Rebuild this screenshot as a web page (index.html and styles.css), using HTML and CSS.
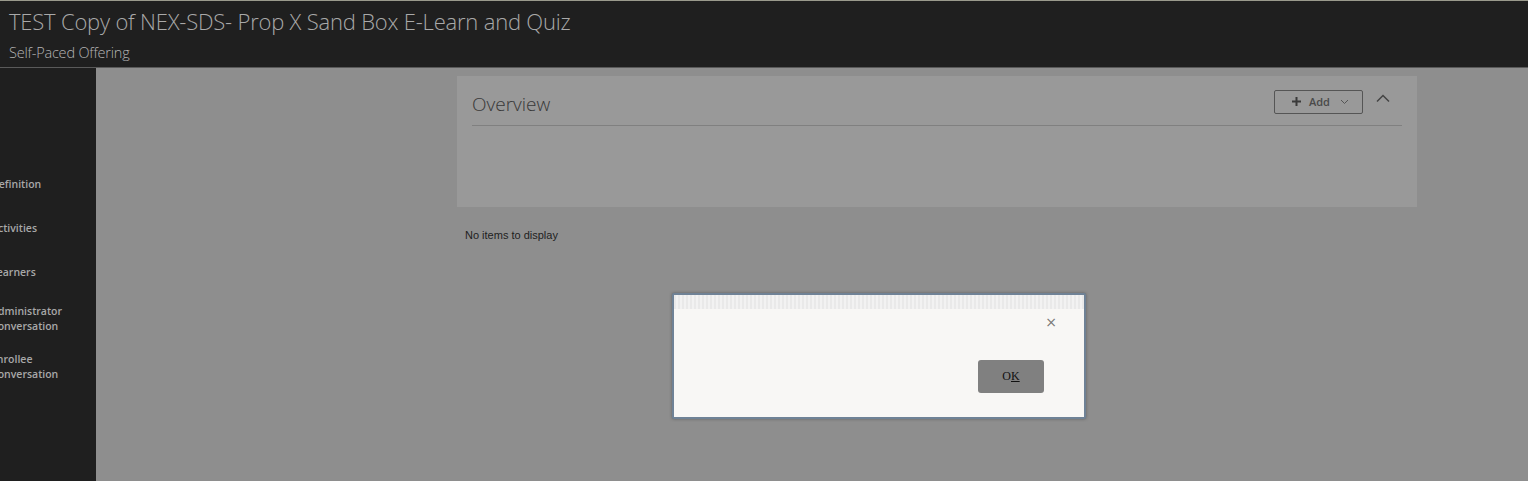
FILE: index.html
```html
<!DOCTYPE html>
<html lang="en">
<head>
  <meta charset="UTF-8">
  <title>Self-Paced Offering</title>
  <link rel="stylesheet" href="styles.css">
</head>
<body>
  <div class="header">
    <h1>TEST Copy of NEX-SDS- Prop X Sand Box E-Learn and Quiz</h1>
    <div class="subtitle">Self-Paced Offering</div>
  </div>
  <div class="page">
    <div class="sidebar">
      <ul class="nav">
        <li>Definition</li>
        <li>Activities</li>
        <li>Learners</li>
        <li>Administrator<br>Conversation</li>
        <li>Enrollee<br>Conversation</li>
      </ul>
    </div>
    <div class="main">
      <div class="panel">
        <div class="panel-head">
          <h2>Overview</h2>
          <button class="add-btn">
            <svg width="11" height="11" viewBox="0 0 11 11"><path d="M5.5 1v9M1 5.5h9" stroke="#3a3a3a" stroke-width="2"/></svg>
            <span>Add</span>
            <svg width="9" height="6" viewBox="0 0 9 6"><path d="M1 1l3.5 3.5L8 1" fill="none" stroke="#555" stroke-width="1"/></svg>
          </button>
          <svg class="collapse" width="14" height="9" viewBox="0 0 14 9"><path d="M1 7.5L7 1.5l6 6" fill="none" stroke="#444" stroke-width="1.5"/></svg>
        </div>
      </div>
      <p class="empty">No items to display</p>
      <div class="dialog-wrap">
        <div class="dialog">
          <div class="dialog-strip"></div>
          <div class="dialog-body">
            <span class="close">&times;</span>
            <button class="ok-btn">O<u>K</u></button>
          </div>
        </div>
      </div>
    </div>
  </div>
</body>
</html>
```

FILE: styles.css
```css
body {
  margin: 0;
  background: #8e8e8e;
  font-family: 'Open Sans', sans-serif;
  height: 481px;
  overflow: hidden;
}

.header {
  background: #1f1f1f;
  border-top: 1px solid #9a9a8c;
  border-bottom: 1px solid #5a5a5a;
  height: 66px;
  padding-left: 9px;
  box-sizing: content-box;
}

.header h1 {
  margin: 0;
  padding-top: 5px;
  font-weight: 300;
  font-size: 22px;
  line-height: 30px;
  color: #a9a9a9;
  letter-spacing: -0.2px;
}

.subtitle {
  margin-top: 7px;
  font-size: 14.5px;
  font-weight: 300;
  color: #b4b4b4;
  letter-spacing: -0.2px;
}

.page {
  display: flex;
  height: 413px;
}

.sidebar {
  width: 96px;
  background: #1f1f1f;
  overflow: hidden;
  flex-shrink: 0;
}

.nav {
  list-style: none;
  margin: 109px 0 0 -9px;
  padding: 0;
  font-family: 'Open Sans', sans-serif;
  font-weight: 600;
  font-size: 10.5px;
  line-height: 15px;
  color: #a8a8a8;
}

.nav li {
  margin-bottom: 29px;
}

.nav li:nth-child(3) {
  margin-bottom: 24px;
}

.nav li:nth-child(4) {
  margin-bottom: 18px;
}

.main {
  flex: 1;
  position: relative;
  padding: 8px 0 0 361px;
}

.panel {
  width: 930px;
  height: 131px;
  background: #999999;
  padding: 0 15px;
}

.panel-head {
  display: flex;
  align-items: center;
  height: 49px;
  border-bottom: 1px solid #808080;
}

.panel-head h2 {
  margin: 0;
  flex: 1;
  font-weight: 300;
  font-size: 19px;
  color: #383838;
  padding-top: 6px;
}

.add-btn {
  display: flex;
  align-items: center;
  gap: 7px;
  width: 89px;
  height: 24px;
  padding: 0 0 0 16px;
  background: transparent;
  border: 1px solid #555;
  border-radius: 2px;
  font-family: 'Open Sans', sans-serif;
  font-size: 11px;
  font-weight: 600;
  color: #4a4a4a;
  margin-top: 2px;
}

.add-btn svg:last-child {
  margin-left: 3px;
}

.collapse {
  margin: 0 12px 4px 13px;
}

.empty {
  margin: 22px 0 0 8px;
  font-family: 'Liberation Sans', Arial, sans-serif;
  font-size: 11px;
  color: #1e1e1e;
}

.dialog-wrap {
  position: absolute;
  left: 576px;
  top: 225px;
}

.dialog {
  width: 410px;
  height: 122px;
  border: 2px solid #6f8296;
  border-radius: 2px;
  background: #f8f7f5;
  box-shadow: 0 0 3px rgba(40, 40, 40, 0.5);
}

.dialog-strip {
  height: 14px;
  background: repeating-linear-gradient(90deg, #e9e9e9 0 2px, #f2f2f2 2px 4px);
}

.dialog-body {
  position: relative;
  height: 108px;
}

.close {
  position: absolute;
  right: 27px;
  top: 5px;
  font-family: 'DejaVu Sans', sans-serif;
  font-size: 14px;
  color: #777;
}

.ok-btn {
  position: absolute;
  left: 304px;
  top: 51px;
  width: 66px;
  height: 33px;
  background: #808080;
  border: none;
  border-radius: 3px;
  font-family: 'Liberation Serif', serif;
  font-size: 12px;
  color: #111;
}
```
